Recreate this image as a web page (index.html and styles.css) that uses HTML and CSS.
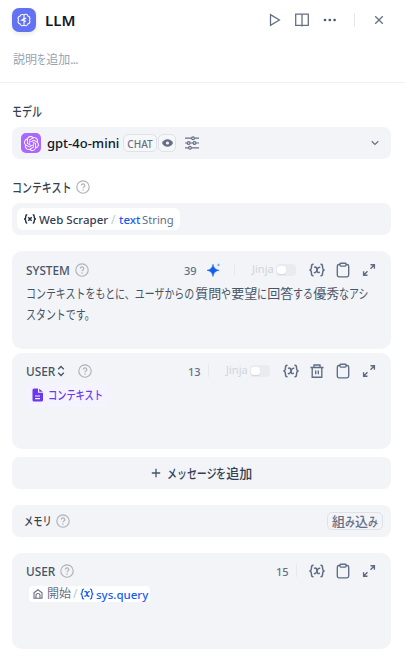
FILE: index.html
```html
<!DOCTYPE html>
<html lang="ja">
<head>
<meta charset="utf-8">
<title>LLM</title>
<link rel="stylesheet" href="styles.css">
</head>
<body>
<svg class="defs" aria-hidden="true">
  <symbol id="help" viewBox="0 0 14 14"><g fill="none" stroke="currentColor" stroke-width="1.15"><circle cx="7" cy="7" r="6.2"/><path d="M5.3 5.6a1.75 1.75 0 1 1 2.6 1.5c-.6.35-.9.6-.9 1.2"/></g><circle cx="7" cy="9.9" r=".75" fill="currentColor"/></symbol>
  <symbol id="var" viewBox="0 0 16 14"><g fill="none" stroke="currentColor" stroke-width="1.5" stroke-linecap="round"><path d="M4 1.2C2.5 1.2 2.5 2 2.5 3.5S2.5 6.3 1.2 7c1.3.7 1.3 2 1.3 3.5s0 2.3 1.5 2.3M12 1.2c1.5 0 1.5.8 1.5 2.3S13.500 6.300 14.800 7c-1.3.7-1.3 2-1.300 3.500s0 2.300-1.500 2.300"/><path d="M5.600 4.300c1.100-.5 1.700 0 2 1l.8 3.200c.300 1 .9 1.400 1.900.9M10.600 4.300c-1.200-.3-1.900.8-2.600 2.600S6.600 10 5.400 9.600"/></g></symbol>
  <symbol id="clip" viewBox="0 0 14 16"><g fill="none" stroke="currentColor" stroke-width="1.35"><path d="M4 2.500H3A1.700 1.700 0 0 0 1.300 4.200v8.900A1.700 1.700 0 0 0 3 14.800h8a1.700 1.700 0 0 0 1.700-1.700V4.200A1.700 1.700 0 0 0 11 2.500h-1"/><rect x="4" y="1.200" width="6" height="2.900" rx=".8"/></g></symbol>
  <symbol id="expand" viewBox="0 0 14 14"><path d="M8.500 1.800h3.900v3.900M12.200 2 8.500 5.700M5.500 12.200H1.600V8.300M1.800 12l3.700-3.700" fill="none" stroke="currentColor" stroke-width="1.400"/></symbol>
  <symbol id="trash" viewBox="0 0 14 14"><path d="M.5 3.500h13M4 3.200V1h6v2.200M2.200 3.500v9.700h9.600V3.500M5.700 6.500v3.800M8.300 6.500v3.800" fill="none" stroke="currentColor" stroke-width="1.350"/></symbol>
</svg>

<header class="head">
  <div class="title-row">
    <span class="logo"><svg width="14" height="14" viewBox="0 0 14 14" fill="none" stroke="#fff" stroke-width="1.100"><path d="M5.500 1.500A2 2 0 0 0 3.200 3 2.600 2.600 0 0 0 1.500 7a2.600 2.600 0 0 0 1.700 4A2.200 2.200 0 0 0 7 12a2.200 2.200 0 0 0 3.800-1 2.600 2.600 0 0 0 1.700-4 2.600 2.600 0 0 0-1.700-4A2.200 2.200 0 0 0 7 2a2 2 0 0 0-1.500-.5ZM7 2v10M7 5.500 4.800 7.200H7M7 6.300l2.200-1.200M7 8.800l2-1"/></svg></span>
    <h1>LLM</h1>
    <nav class="actions">
      <span class="play"><svg width="12" height="14" viewBox="0 0 12 14"><path d="M1.500 1.600 10.400 7l-8.900 5.400Z"/></svg></span>
      <span><svg width="14" height="14" viewBox="0 0 14 14"><path d="M.7 1.200h12.600v11.200H.7ZM7 1.200v12.200"/></svg></span>
      <span><svg width="14" height="4" viewBox="0 0 14 4"><g class="solid"><circle cx="2" cy="2" r="1.350"/><circle cx="6.800" cy="2" r="1.350"/><circle cx="11.600" cy="2" r="1.350"/></g></svg></span>
      <i class="sep"></i>
      <span class="close"><svg width="10" height="10" viewBox="0 0 10 10"><path d="m1.200 1.200 7.600 7.600M8.800 1.200 1.200 8.800"/></svg></span>
    </nav>
  </div>
  <p class="desc">説明<span class="k k1">を</span>追加<span class="dots">...</span></p>
</header>

<main>
  <h2 class="label"><span class="k k3">モデル</span></h2>
  <div class="field model">
    <span class="openai"><svg width="15" height="15" viewBox="0 0 24 24" fill="#fff"><path d="M22.2819 9.8211a5.9847 5.9847 0 0 0-.5157-4.9108 6.0462 6.0462 0 0 0-6.5098-2.9A6.0651 6.0651 0 0 0 4.9807 4.1818a5.9847 5.9847 0 0 0-3.9977 2.9 6.0462 6.0462 0 0 0 .7427 7.0966 5.98 5.98 0 0 0 .511 4.9107 6.051 6.051 0 0 0 6.5146 2.9001A5.9847 5.9847 0 0 0 13.2599 24a6.0557 6.0557 0 0 0 5.7718-4.2058 5.9894 5.9894 0 0 0 3.9977-2.9001 6.0557 6.0557 0 0 0-.7475-7.0729zm-9.022 12.6081a4.4755 4.4755 0 0 1-2.8764-1.0408l.1419-.0804 4.7783-2.7582a.7948.7948 0 0 0 .3927-.6813v-6.7369l2.02 1.1686a.071.071 0 0 1 .038.052v5.5826a4.504 4.504 0 0 1-4.4945 4.4944zm-9.6607-4.1254a4.4708 4.4708 0 0 1-.5346-3.0137l.142.0852 4.783 2.7582a.7712.7712 0 0 0 .7806 0l5.8428-3.3685v2.3324a.0804.0804 0 0 1-.0332.0615L9.74 19.9502a4.4992 4.4992 0 0 1-6.1408-1.6464zM2.3408 7.8956a4.485 4.485 0 0 1 2.3655-1.9728V11.6a.7664.7664 0 0 0 .3879.6765l5.8144 3.3543-2.0201 1.1685a.0757.0757 0 0 1-.071 0l-4.8303-2.7865A4.504 4.504 0 0 1 2.3408 7.872zm16.5963 3.8558L13.1038 8.364 15.1192 7.2a.0757.0757 0 0 1 .071 0l4.8303 2.7913a4.4944 4.4944 0 0 1-.6765 8.1042v-5.6772a.79.79 0 0 0-.407-.667zm2.0107-3.0231l-.142-.0852-4.7735-2.7818a.7759.7759 0 0 0-.7854 0L9.409 9.2297V6.8974a.0662.0662 0 0 1 .0284-.0615l4.8303-2.7866a4.4992 4.4992 0 0 1 6.6802 4.66zM8.3065 12.863l-2.02-1.1638a.0804.0804 0 0 1-.038-.0567V6.0742a4.4992 4.4992 0 0 1 7.3757-3.4537l-.142.0805L8.704 5.459a.7948.7948 0 0 0-.3927.6813zm1.0976-2.3654l2.602-1.4998 2.6069 1.4998v2.9994l-2.5974 1.4997-2.6067-1.4997Z"/></svg></span>
    <b>gpt-4o-mini</b>
    <span class="badge chat">CHAT</span>
    <span class="badge eye"><svg width="11" height="8" viewBox="0 0 11 8"><path d="M0 4C1.200 1.400 3 .2 5.500.2S9.800 1.400 11 4C9.800 6.600 8 7.800 5.500 7.800S1.200 6.600 0 4Z" fill="#667085"/><circle cx="5.500" cy="4" r="1.600" fill="#f2f4f7"/></svg></span>
    <svg class="sliders" width="14" height="14" viewBox="0 0 14 14" fill="none" stroke="#667085" stroke-width="1.200"><path d="M0 2.200h6.500M9.500 2.200H14M0 7h2.200M5.200 7H8M11 7h3M0 11.800h3.500M6.500 11.800H14"/><circle cx="8" cy="2.200" r="1.400"/><circle cx="3.700" cy="7" r="1.400"/><circle cx="9.500" cy="7" r="1.400"/><circle cx="5" cy="11.800" r="1.400"/></svg>
    <svg class="chev" width="8" height="6" viewBox="0 0 8 6" fill="none" stroke="#667085" stroke-width="1.200"><path d="m.7 1.200 3.300 3.200 3.300-3.200"/></svg>
  </div>

  <h2 class="label second"><span class="k k6">コンテキスト</span><svg class="help"><use href="#help"/></svg></h2>
  <div class="field context">
    <span class="pill">
      <svg width="12" height="10" viewBox="0 0 12 10" fill="none" stroke="#1d2939" stroke-width="1.400"><path d="M3.200.8c-1.400 0-1.400.6-1.400 1.700S1.800 4.500.7 5c1.100.500 1.100 1.400 1.100 2.500s0 1.700 1.400 1.700M8.800.8c1.400 0 1.400.6 1.400 1.700s0 2 1.100 2.500c-1.100.500-1.100 1.400-1.100 2.500s0 1.700-1.400 1.700M4.300 3.300l3.400 3.400M7.700 3.300 4.300 6.700"/></svg>
      <span class="node">Web Scraper</span><i class="slash">/</i><span class="blue">text</span><span class="type">String</span>
    </span>
  </div>

  <section class="card system">
    <div class="bar"><span class="role">SYSTEM</span><svg class="help"><use href="#help"/></svg>
      <div class="tools"><span class="count">39</span>
        <svg class="spark" width="14" height="14" viewBox="0 0 14 14"><path d="M6 1.200C6.900 5 8 6.300 12.200 7.300 8 8.300 6.900 9.600 6 13.600 5.100 9.600 4 8.300 0 7.300 4 6.300 5.100 5 6 1.200Z" fill="#155eef" stroke="#155eef" stroke-width=".5"/><path d="M11.500 0c.2 1.400.6 1.800 2 2-1.400.2-1.800.6-2 2-.2-1.400-.6-1.800-2-2 1.400-.2 1.800-.6 2-2Z" fill="#6b9cf8"/></svg>
        <i class="rule"></i><span class="jinja">Jinja</span><span class="toggle"></span>
        <span class="cell"><svg width="16" height="14"><use href="#var"/></svg></span><span class="cell"><svg width="14" height="16"><use href="#clip"/></svg></span><span class="cell"><svg width="14" height="14"><use href="#expand"/></svg></span>
      </div>
    </div>
    <p class="prompt"><span class="k k17">コンテキストをもとに、ユーザからの</span>質問<span class="k k1">や</span>要望<span class="k k1">に</span>回答<span class="k k2">する</span>優秀<span class="k k3">なアシ</span><br><span class="k k8">スタントです。</span></p>
  </section>

  <section class="card user">
    <div class="bar"><span class="role">USER</span><svg class="updown" width="8" height="12" viewBox="0 0 8 12" fill="none" stroke="#475467" stroke-width="1.300"><path d="M1.200 4.200 4 1.500l2.800 2.700M1.200 7.800 4 10.500l2.800-2.700"/></svg><svg class="help"><use href="#help"/></svg>
      <div class="tools"><span class="count before-rule">13</span><i class="rule"></i><span class="jinja">Jinja</span><span class="toggle"></span>
        <span class="cell"><svg width="16" height="14"><use href="#var"/></svg></span><span class="cell"><svg width="14" height="14"><use href="#trash"/></svg></span><span class="cell"><svg width="14" height="16"><use href="#clip"/></svg></span><span class="cell"><svg width="14" height="14"><use href="#expand"/></svg></span>
      </div>
    </div>
    <div class="chip"><svg width="11" height="14" viewBox="0 0 11 14"><path d="M2 .5h4v4.300h5V12a1.500 1.500 0 0 1-1.500 1.500H2A1.500 1.500 0 0 1 .5 12V2A1.500 1.500 0 0 1 2 .5ZM7.200.7 10.700 3.800H7.200Z" fill="#6938ef"/><path d="M3 8h5M3 10.700h5" stroke="#f4f3ff" stroke-width="1.200"/></svg><span class="k k6">コンテキスト</span></div>
  </section>

  <button class="add"><svg width="10" height="10" viewBox="0 0 10 10"><path d="M5 .8v8.400M.8 5h8.400" stroke="#475467" stroke-width="1.300"/></svg><span><span class="k k5">メッセージ</span><span class="k k1">を</span>追加</span></button>

  <div class="field memory"><span class="k k3">メモリ</span><svg class="help"><use href="#help"/></svg><span class="builtin">組<span class="k k1">み</span>込<span class="k k1">み</span></span></div>

  <section class="card last">
    <div class="bar"><span class="role">USER</span><svg class="help"><use href="#help"/></svg>
      <div class="tools"><span class="count before-rule">15</span><i class="rule end"></i>
        <span class="cell"><svg width="16" height="14"><use href="#var"/></svg></span><span class="cell"><svg width="14" height="16"><use href="#clip"/></svg></span><span class="cell"><svg width="14" height="14"><use href="#expand"/></svg></span>
      </div>
    </div>
    <div class="query"><svg width="10" height="10" viewBox="0 0 10 10" fill="none" stroke="#667085" stroke-width="1.100"><path d="M1 3.700 5 .8l4 2.900v5.500H1ZM3 9V6.500a2 2 0 0 1 4 0V9"/></svg><span class="start">開始</span><i class="slash">/</i><svg class="qvar" width="14" height="12"><use href="#var"/></svg><span class="blue">sys.query</span></div>
  </section>
</main>
</body>
</html>
```
FILE: styles.css
```css
* { box-sizing: border-box; }
body {
  margin: 0;
  width: 405px;
  height: 658px;
  overflow: hidden;
  background: #fff;
  color: #354052;
  font: 13px/20px "Noto Sans", "Noto Sans CJK JP", sans-serif;
}
h1, h2, p { margin: 0; }
svg { flex: none; display: block; }
.defs { display: none; }
i { font-style: normal; }

/* condensed kana */
.k {
  display: inline-block;
  white-space: nowrap;
  transform: scaleX(.766);
  transform-origin: left;
  width: calc(var(--n) * .766em);
}
.k1 { --n: 1; }
.k2 { --n: 2; }
.k3 { --n: 3; }
.k5 { --n: 5; }
.k6 { --n: 6; }
.k8 { --n: 8; }
.k17 { --n: 17; }

.head { height: 83px; border-bottom: 1px solid #eff0f2; }
.title-row { display: flex; align-items: center; height: 40px; padding-left: 12px; }
.logo {
  display: flex; align-items: center; justify-content: center;
  width: 24px; height: 24px; border-radius: 7px;
  background: #6172f3; box-shadow: 0 2px 4px #10182818;
}
h1 { margin-left: 9px; font-size: 15px; font-weight: 600; color: #101828; }
.actions { display: flex; align-items: center; margin-left: auto; padding-right: 12px; color: #5d6b82; }
.actions span { width: 28px; display: flex; justify-content: center; }
.actions .play { padding-left: 2px; }
.actions svg { fill: none; stroke: #667085; stroke-width: 1.3; }
.actions .solid { fill: #495774; stroke: none; }
.actions .sep { width: 1px; height: 14px; margin: 0 10px; background: #e4e5e8; }
.desc { padding: 10px 13px; color: #98a2b3; font-size: 12px; }
.dots { letter-spacing: -.7px; }

main { padding: 18px 14px 0 12px; }
.label { display: flex; align-items: center; height: 20px; margin-bottom: 6px; font-size: 13px; font-weight: 500; }
.second { margin-top: 18px; }
.help { width: 14px; height: 14px; margin-left: 4px; color: #b0b2b8; }
.field { display: flex; align-items: center; height: 32px; border-radius: 8px; background: #f2f4f7; }
.model { padding: 0 12px 0 9px; }
.openai { display: flex; align-items: center; justify-content: center; width: 20px; height: 20px; border-radius: 5px; background: #ab68ff; }
.model b { width: 76px; margin-left: 6px; font-weight: 500; color: #101828; white-space: nowrap; }
.badge { display: flex; align-items: center; justify-content: center; height: 18px; border: 1px solid #dfe2e7; border-radius: 5px; background: #f6f7f9; color: #667085; font-size: 10px; font-weight: 500; }
.chat { width: 34px; padding-top: 1px; }
.eye { width: 18px; margin-left: 1px; }
.sliders { margin-left: 9px; }
.chev { margin-left: auto; }
.context { padding-left: 5px; }
.pill { display: flex; align-items: center; width: 163px; height: 22px; padding: 2px 0 0 7px; border-radius: 6px; background: #fff; font-size: 12px; white-space: nowrap; }
.pill svg { margin-top: -2px; }
.node { width: 69px; margin-left: 3px; font-weight: 500; font-size: 11.5px; }
.slash { color: #c3c8d1; }
.pill .slash { width: 11px; padding-left: 3px; }
.blue { color: #155eef; font-weight: 500; }
.pill .blue { width: 23px; font-size: 11.5px; }
.type { color: #667085; font-size: 11.3px; }

.card { border-radius: 10px; background: #f2f4f7; height: 96px; padding: 8px 9px 0 14px; }
.bar { display: flex; align-items: center; height: 20px; }
.role { font-size: 11.8px; font-weight: 500; color: #475467; }
.role + .help { margin-left: 5px; }
.tools { display: flex; align-items: center; margin-left: auto; color: #5f6c84; }
.count { width: 13px; padding-top: 2px; font-size: 11px; line-height: 18px; font-weight: 500; color: #667085; }
.before-rule { margin-right: 7px; }
.rule { width: 1px; height: 12px; background: #e6e8ec; }
.rule.end { margin-right: 7px; }
.cell { display: flex; align-items: center; justify-content: center; width: 26px; }
.spark { margin: 0 13px 0 10px; }
.jinja { width: 24px; margin: -2px 0 0 17px; font-size: 11px; line-height: 14px; color: #d0d4db; }
.toggle { width: 20px; height: 12px; margin-right: 8px; padding: 2px 1px; border-radius: 4px; background: #e9ebf0; }
.toggle::before { content: ""; display: block; width: 9px; height: 8px; border-radius: 3px; background: #fff; box-shadow: 0 1px 1px #1018281c; }

.system { height: 98px; margin: 16px 0 4px; padding-top: 9px; }
.prompt { margin-top: 3px; color: #475467; line-height: 21px; white-space: nowrap; }
.updown { margin-left: 2px; }
.updown + .help { margin-left: 13px; }
.chip { display: flex; align-items: center; width: 83px; height: 24px; margin-top: 2px; padding-left: 6px; border-radius: 6px; background: #f4f3ff; color: #6938ef; font-size: 12px; font-weight: 500; }
.chip .k { margin: 2px 0 0 5px; }

.add { display: flex; align-items: center; justify-content: center; gap: 6px; width: 100%; height: 32px; margin: 8px 0 16px; padding: 0; border: 0; border-radius: 8px; background: #f2f4f7; color: #354052; font: inherit; font-weight: 500; }
.memory { padding: 0 8px 0 12px; font-size: 12px; font-weight: 500; }
.memory > .k { margin-top: 1px; }
.builtin { width: 56px; height: 18px; margin-left: auto; border: 1px solid #dfe2e7; border-radius: 5px; color: #667085; font-size: 13px; line-height: 16px; text-align: center; white-space: nowrap; }
.last { margin-top: 16px; }
.query { display: flex; align-items: center; width: 121px; height: 16px; margin: 5px 0 0 3px; padding-left: 4px; border-radius: 4px; background: #fff; font-size: 12px; white-space: nowrap; }
.start { margin-left: 4px; color: #667085; }
.query .slash { width: 9px; padding-left: 2px; }
.qvar { margin: 0 2px 0 0; color: #155eef; }
.query .blue { padding-top: 1px; font-size: 11.5px; }
```
